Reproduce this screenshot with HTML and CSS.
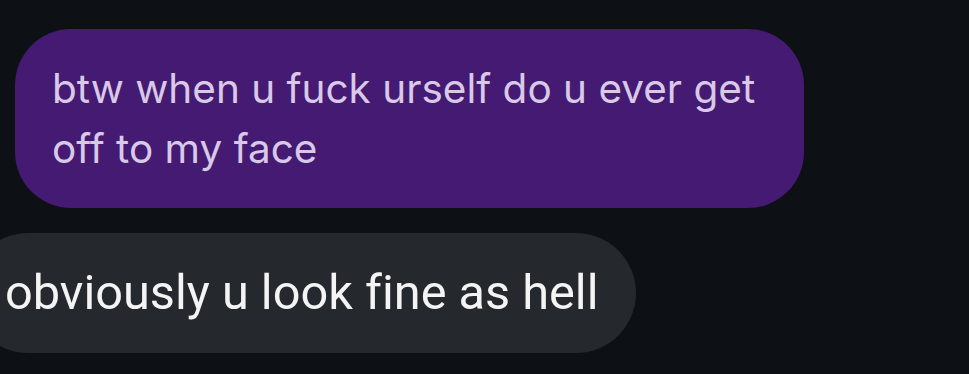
FILE: index.html
```html
<!DOCTYPE html>
<html lang="en">
<head>
  <meta charset="UTF-8">
  <title>Chat</title>
  <link rel="stylesheet" href="styles.css">
</head>
<body>

  <div class="thread">
    <!-- mensagem enviada -->
    <div class="bubble bubble-sent">
      btw when u fuck urself do u ever get off to my face
    </div>

    <!-- mensagem recebida -->
    <div class="bubble bubble-received">
      obviously u look fine as hell
    </div>
  </div>

</body>
</html>
```

FILE: styles.css
```css
body {
  margin: 0;
  padding: 0;
  background-color: #0d1014;
  overflow: hidden;
}

.thread {
  display: flex;
  flex-direction: column;
  align-items: flex-start;
  gap: 25px;
  padding-top: 29px;
}

.bubble {
  box-sizing: border-box;
  font-variant-ligatures: none;
}

.bubble-sent {
  width: 789px;
  margin-left: 15px;
  padding: 30px 30px 29px 37px;
  background-color: #451a73;
  color: #d8c9e6;
  font-family: Inter, "Noto Sans", sans-serif;
  font-size: 40.5px;
  line-height: 60px;
  border-radius: 56px;
}

.bubble-received {
  margin-left: -32px;
  padding: 0 37px;
  height: 120px;
  background-color: #25282c;
  color: #f4f4f5;
  font-family: Roboto, sans-serif;
  font-size: 48.7px;
  line-height: 120px;
  border-radius: 60px;
  white-space: nowrap;
}
```
